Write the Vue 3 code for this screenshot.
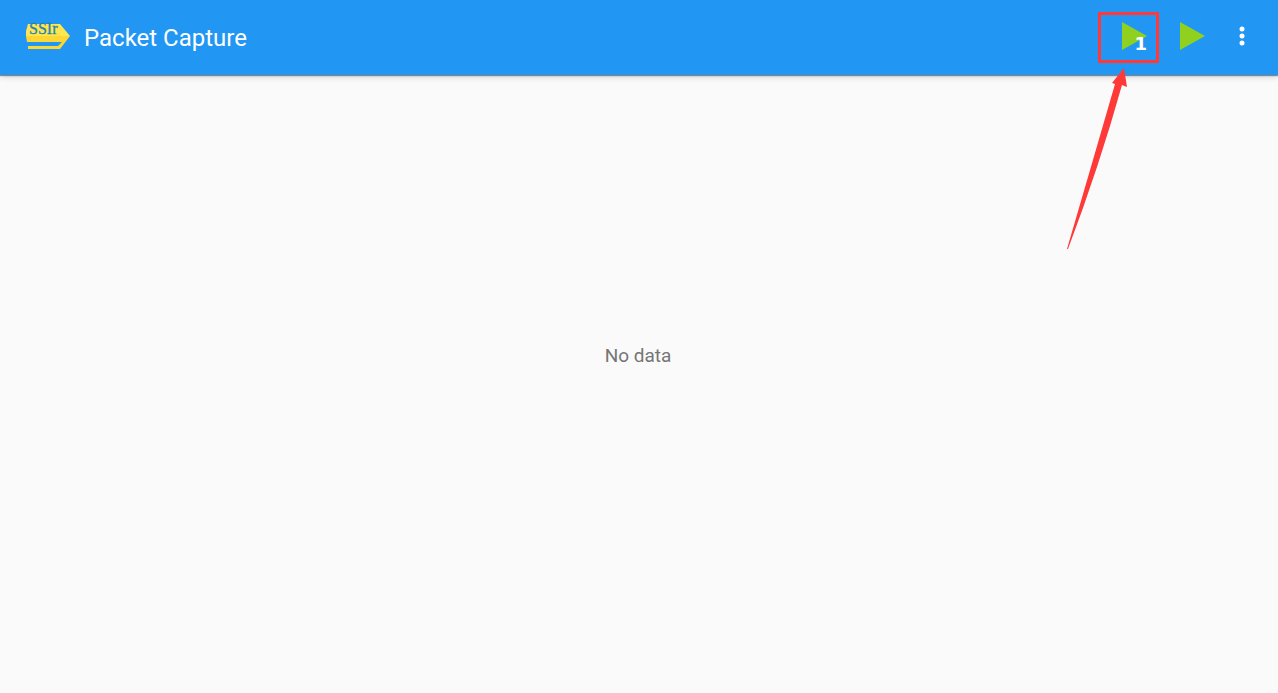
<script setup>
const title = 'Packet Capture'
</script>

<template>
  <div class="app">
    <header class="bar">
      <svg class="logo" viewBox="0 0 46 28" aria-hidden="true">
        <path d="M3 2H35L45 14H1V9Z" fill="#ffe64e" />
        <path d="M1 14H45L35 27H3V24H33L37 20H2Z" fill="#fdd835" />
        <text x="4" y="12" class="logo-text">SSIr</text>
      </svg>
      <h1>{{ title }}</h1>
      <div class="actions">
        <div class="marked">
          <button class="play" type="button" aria-label="Capture one app">
            <svg viewBox="0 0 26 28"><path d="M1 0L26 14L1 28Z" fill="#8fd11e" /></svg>
            <span class="count">1</span>
          </button>
          <span class="frame"></span>
          <svg class="arrow" viewBox="0 0 62 184" aria-hidden="true">
            <path d="M58 1L61 20L56 18Q33 100 2 182L1 182Q25 100 49 17L46 16Z" fill="#ff3838" />
          </svg>
        </div>
        <button class="play" type="button" aria-label="Start capture">
          <svg viewBox="0 0 26 28"><path d="M1 0L26 14L1 28Z" fill="#8fd11e" /></svg>
        </button>
        <button class="more" type="button" aria-label="More options">
          <svg viewBox="0 0 6 20" fill="#fff">
            <circle cx="3" cy="3" r="2.5" /><circle cx="3" cy="10" r="2.5" /><circle cx="3" cy="17" r="2.5" />
          </svg>
        </button>
      </div>
    </header>
    <main class="content">
      <p>No data</p>
    </main>
  </div>
</template>

<style>
body {
  background: #fafafa;
}
</style>

<style scoped>
.app {
  min-height: 100vh;
  display: flex;
  flex-direction: column;
  background: #fafafa;
  font-family: Roboto, "Noto Sans", sans-serif;
}
.bar {
  position: relative;
  display: flex;
  align-items: center;
  height: 75px;
  padding: 0 15px 0 25px;
  background: #2196f3;
  box-shadow: 0 1px 1px rgba(0, 0, 0, 0.4), 0 2px 6px rgba(0, 0, 0, 0.16);
}
.logo {
  width: 46px;
  height: 28px;
  margin-bottom: 4px;
  overflow: visible;
}
.logo-text {
  font: 16px "Liberation Serif", serif;
  fill: #1f83b8;
  stroke: #1f83b8;
  stroke-width: 0.3;
}
h1 {
  margin: 0 0 0 13px;
  font-size: 24px;
  font-weight: 400;
  line-height: 32px;
  color: #fff;
}
.actions {
  display: flex;
  align-items: center;
  margin-left: auto;
  padding-bottom: 3px;
}
.marked {
  position: relative;
}
button {
  position: relative;
  display: flex;
  align-items: center;
  justify-content: center;
  height: 48px;
  padding: 0;
  border: 0;
  background: none;
  cursor: pointer;
}
.play {
  width: 58px;
}
.play svg {
  width: 26px;
  height: 28px;
}
.more {
  width: 42px;
}
.more svg {
  width: 6px;
  height: 20px;
}
.count {
  position: absolute;
  right: 16px;
  bottom: 5px;
  font: bold 18px/22px "DejaVu Sans", sans-serif;
  color: #fff;
}
.frame {
  position: absolute;
  top: 0;
  left: -7px;
  width: 61px;
  height: 51px;
  box-sizing: border-box;
  border: 3px solid #ff3838;
  pointer-events: none;
}
.arrow {
  position: absolute;
  top: 55px;
  left: -39px;
  width: 62px;
  height: 184px;
  pointer-events: none;
}
.content {
  flex: 1;
  display: flex;
  align-items: center;
  justify-content: center;
  padding: 0 2px 56px 0;
}
p {
  margin: 0;
  font-size: 19px;
  line-height: 24px;
  color: #757575;
}
</style>
